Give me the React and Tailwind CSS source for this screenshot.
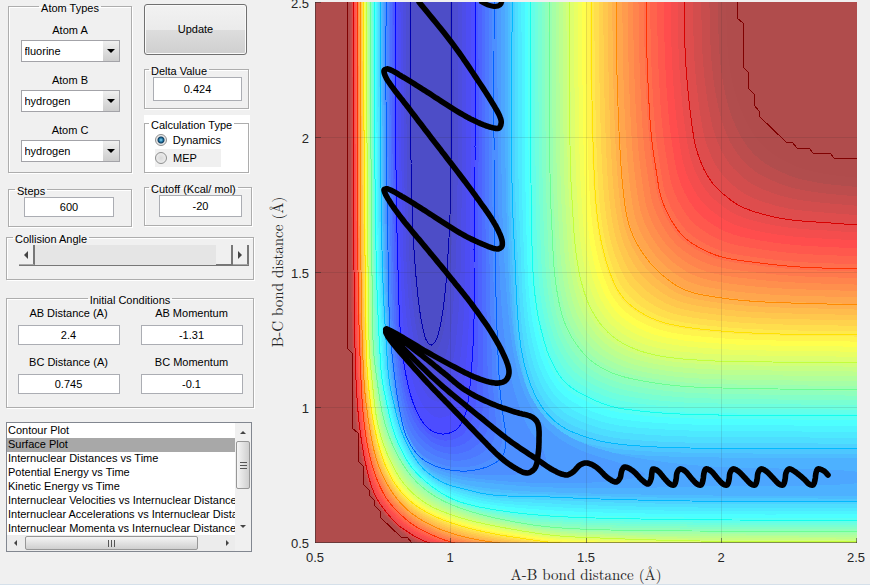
import { useState } from "react";

const atoms = ["fluorine", "hydrogen", "chlorine", "iodine"];
const plots = [
  "Contour Plot",
  "Surface Plot",
  "Internuclear Distances vs Time",
  "Potential Energy vs Time",
  "Kinetic Energy vs Time",
  "Internuclear Velocities vs Internuclear Distance",
  "Internuclear Accelerations vs Internuclear Distance",
  "Internuclear Momenta vs Internuclear Distance",
];

// Upper right side of each energy level, from the top edge to the right edge
const upper = [
  [1, [[730, 2], [733, 60], [743, 100], [764, 138], [795, 160], [825, 169], [857, 173]]],
  [2, [[684, 2], [686, 67], [694, 139], [702, 165], [711, 181], [721, 192], [740, 206], [766, 215], [792, 220], [831, 223], [857, 225]]],
  [3, [[646, 2], [647, 58], [651, 132], [657, 176], [661, 197], [670, 218], [683, 236], [700, 248], [722, 257], [752, 262], [800, 267], [857, 269]]],
  [4, [[616, 2], [617, 75], [620, 150], [624, 198], [630, 228], [642, 252], [660, 273], [685, 290], [722, 298], [765, 302], [827, 304], [857, 305]]],
  [5, [[591, 2], [592, 100], [595, 190], [600, 235], [609, 270], [621, 295], [640, 312], [669, 324], [721, 331], [780, 334], [857, 335]]],
  [6, [[569, 2], [570, 145], [572, 200], [577, 260], [587, 300], [603, 327], [626, 345], [660, 356], [715, 361], [772, 362], [857, 363]]],
  [7, [[549, 2], [550, 173], [552, 230], [556, 285], [566, 326], [586, 356], [610, 372], [638, 380], [680, 386], [722, 388], [857, 390]]],
  [8, [[530, 2], [531, 183], [533, 272], [537, 310], [543, 337], [550, 358], [563, 380], [580, 393], [610, 406], [640, 411], [680, 414], [722, 415], [857, 416]]],
  [9, [[512, 2], [512, 183], [515, 260], [518, 320], [522, 353], [530, 383], [542, 407], [557, 423], [575, 433], [605, 442], [640, 446], [690, 448], [857, 449]]],
  [9.4, [[508, 2], [508, 200], [511, 290], [516, 350], [525, 395], [542, 425], [575, 446], [630, 455], [720, 458], [857, 459]]],
];

// Lower left side; levels that leave through the bottom run on below it and get clipped
const lower = [
  [1, [[349, 2], [350, 270], [352, 380], [355, 430], [362, 470], [372, 497], [384, 516], [398, 530], [412, 542], [500, 575], [857, 600]]],
  [2, [[353, 2], [354, 270], [356, 380], [360, 430], [367, 470], [375, 495], [387, 513], [402, 528], [430, 543], [520, 562], [857, 585]]],
  [3, [[357, 2], [358, 270], [361, 380], [365, 430], [373, 468], [385, 496], [400, 514], [420, 529], [455, 543], [540, 556], [857, 572]]],
  [4, [[360, 2], [361, 270], [364, 380], [370, 430], [378, 464], [392, 492], [410, 512], [435, 527], [465, 537], [500, 543], [600, 552], [857, 563]]],
  [5, [[363, 2], [366, 340], [368, 380], [374, 425], [384, 462], [398, 488], [418, 507], [446, 521], [485, 532], [540, 541], [560, 543], [857, 552]]],
  [6, [[366, 2], [369, 340], [372, 380], [378, 425], [389, 458], [405, 485], [427, 504], [455, 516], [490, 525], [550, 535], [600, 538], [700, 541], [857, 542]]],
  [7, [[370, 2], [373, 340], [377, 380], [384, 420], [395, 450], [412, 477], [433, 495], [460, 508], [500, 519], [550, 527], [610, 530], [700, 531], [857, 531]]],
  [8, [[374, 2], [376, 250], [381, 370], [386, 400], [395, 435], [410, 465], [430, 485], [455, 500], [490, 509], [550, 516], [640, 519], [740, 520], [857, 520]]],
  [9, [[380, 2], [382, 250], [388, 370], [393, 400], [403, 435], [420, 465], [440, 481], [460, 488], [493, 495], [550, 497], [600, 499], [690, 501], [857, 501]]],
  [9.4, [[382, 2], [384, 250], [390, 362], [396, 405], [408, 440], [425, 466], [445, 478], [480, 487], [550, 492], [700, 495], [857, 496]]],
];

// Levels that close inside the plot
const wells = [
  [10, [[386, 2], [386, 100], [388, 250], [390, 330], [395, 380], [400, 412], [407, 438], [420, 457], [438, 467], [460, 471], [480, 469], [495, 463], [503, 455], [506, 440], [503, 415], [500, 390], [497, 330], [495, 250], [494, 150], [494, 2]]],
  [11, [[395, 2], [396, 170], [398, 270], [401, 340], [408, 385], [417, 412], [429, 429], [443, 434], [457, 429], [466, 412], [471, 375], [474, 320], [474, 250], [475, 160], [475, 2]]],
  [12, [[410, 2], [411, 160], [412, 200], [414, 250], [419, 305], [425, 337], [431, 345], [437, 338], [443, 310], [447, 270], [450, 215], [451, 160], [451, 2]]],
];

// Tongues of the valley between the last open level and the first closed one
const tongues = {
  16: [[383, 2], [385, 250], [391, 362], [397, 405], [410, 442], [428, 467], [450, 477], [480, 482], [540, 487], [620, 488], [720, 486], [860, 483], [860, 472], [720, 467], [650, 460], [600, 449], [565, 434], [540, 411], [524, 380], [513, 330], [508, 260], [505, 130], [505, 2]],
  15: [[384, 2], [386, 250], [392, 362], [398, 406], [412, 443], [430, 465], [455, 475], [490, 480], [540, 483], [600, 482], [645, 475], [625, 465], [580, 450], [550, 431], [530, 405], [517, 370], [508, 310], [502, 200], [501, 2]],
  14: [[385, 2], [387, 250], [392, 350], [399, 406], [413, 445], [432, 463], [455, 472], [485, 475], [520, 474], [545, 465], [543, 450], [527, 425], [514, 390], [506, 350], [500, 280], [498, 150], [497, 2]],
};

const cutoffLines = [
  "M347 2V348L352 353V428L358 433V461L363 466V484L369 490V495L374 500V505L380 511V517L401 537H407L412 543",
  "M737 2V18L743 23V67L748 72V88L754 94V105L759 111V116L786 142H792L797 148H809L813 153H830L834 158H857",
];

const peaks = [653, 680, 706, 733, 761, 789];
const troughs = [674, 701, 727, 755, 783, 813];
const wave = peaks.flatMap((p, i) => {
  const t = troughs[i];
  return [[p, 469], [p + 5, 471], [t - 9, 479], [t - 4, 484], [t, 485], [t + 2, 480], [t + 3, 473]];
});
const trajectory = [
  [419, 2], [452, 43], [473, 73], [493, 104], [501, 120], [499, 128], [490, 127], [477, 122], [460, 113], [427, 92], [403, 77],
  [388, 69], [384, 71], [388, 81], [407, 106], [433, 140], [460, 175], [480, 202], [493, 221], [501, 237], [502, 246], [497, 249],
  [480, 243], [460, 233], [427, 212], [403, 197], [388, 189], [384, 190], [390, 202], [403, 220], [427, 249], [450, 277], [473, 306],
  [493, 335], [506, 360], [509, 373], [505, 381], [495, 383], [477, 378], [460, 370], [427, 352], [387, 329], [386, 333], [395, 346],
  [425, 380], [450, 406], [480, 437], [500, 457], [515, 468], [527, 473], [535, 468], [538, 455], [539, 440], [538, 424], [532, 417],
  [515, 412], [490, 403], [465, 390], [445, 374], [420, 354], [386, 329], [405, 350], [440, 384], [480, 417], [510, 441], [538, 460],
  [553, 470], [566, 475], [573, 472], [580, 465], [587, 463], [596, 467], [608, 478], [616, 482], [620, 478], [622, 470], [625, 467],
  [633, 471], [642, 480], [648, 484], [651, 479], [652, 472], ...wave, [818, 469], [824, 471], [828, 475],
];

const smooth = (pts) => {
  const out = [];
  for (let i = 0; i < pts.length - 1; i++) {
    const p0 = pts[i - 1] || pts[i];
    const p1 = pts[i];
    const p2 = pts[i + 1];
    const p3 = pts[i + 2] || p2;
    // spacing of the points is uneven, so tangents are scaled to each segment
    const len = (a, b) => Math.hypot(b[0] - a[0], b[1] - a[1]) || 1;
    const d = len(p1, p2);
    const m1 = [0, 1].map((k) => ((p2[k] - p0[k]) / (len(p0, p1) + d)) * d);
    const m2 = [0, 1].map((k) => ((p3[k] - p1[k]) / (len(p2, p3) + d)) * d);
    for (let s = 0; s < 12; s++) {
      const t = s / 12;
      const a = 2 * t ** 3 - 3 * t ** 2 + 1;
      const b = t ** 3 - 2 * t ** 2 + t;
      const c = -2 * t ** 3 + 3 * t ** 2;
      const e = t ** 3 - t ** 2;
      out.push([0, 1].map((k) => a * p1[k] + b * m1[k] + c * p2[k] + e * m2[k]));
    }
  }
  out.push(pts[pts.length - 1]);
  return out;
};

const sample = (pts, param) => {
  const line = smooth(pts);
  const key = param(line);
  const out = [];
  let j = 0;
  for (let i = 0; i <= 160; i++) {
    const u = i / 160;
    while (j < line.length - 2 && key[j + 1] < u) j++;
    const f = Math.min(1, Math.max(0, (u - key[j]) / (key[j + 1] - key[j] || 1)));
    out.push([0, 1].map((k) => line[j][k] + f * (line[j + 1][k] - line[j][k])));
  }
  return out;
};

// open curves are matched by the angle seen from the top right corner
const byAngle = (line) => line.map(([x, y]) => Math.atan2(y - 2, 857 - x) / (Math.PI / 2));
const byLength = (line) => {
  let sum = 0;
  const acc = line.map((p, i) => (i ? (sum += Math.hypot(p[0] - line[i - 1][0], p[1] - line[i - 1][1])) : 0));
  return acc.map((v) => v / sum);
};

const between = (keys, level) => {
  let i = 0;
  while (i < keys.length - 2 && keys[i + 1][0] < level) i++;
  const [l0, a] = keys[i];
  const [l1, b] = keys[i + 1];
  const f = Math.min(1, (level - l0) / (l1 - l0));
  return a.map((p, n) => [0, 1].map((k) => p[k] + f * (b[n][k] - p[k])));
};

const toPath = (pts) => "M" + pts.map((p) => p[0].toFixed(1) + " " + p[1].toFixed(1)).join("L");

const jet = (i, alpha) => {
  const v = i / 64;
  const ch = (c) => Math.min(1, Math.max(0, 1.5 - Math.abs(4 * v - c)));
  return `rgb(${[3, 2, 1].map((c) => Math.round(255 * (ch(c) * alpha + 1 - alpha))).join(",")})`;
};

const step = 5.55;
const upperKeys = upper.map(([l, p]) => [l, sample(p, byAngle)]);
const lowerKeys = lower.map(([l, p]) => [l, sample(p, byAngle)]);
const wellKeys = wells.map(([l, p]) => [l, sample(p, byLength)]);

const bandShape = (i) => {
  const level = 1 + (63.5 - i) / step;
  if (tongues[i]) return smooth(tongues[i]);
  if (level < 9.5) return [...between(lowerKeys, level), ...between(upperKeys, level).reverse()];
  return between(wellKeys, level);
};

const bands = [];
for (let i = 63; i >= 3; i--) {
  bands.push({ d: toPath(bandShape(i)) + "Z", fill: jet(i, 0.7) });
}

const contours = [...upper.slice(1, 9), ...lower.slice(1, 9), ...wells].map(([level, p]) => ({
  d: toPath(smooth(p)),
  stroke: jet(64 - (level - 1) * step, 1),
}));

const trajectoryPath = toPath(smooth(trajectory));

const xTicks = [["0.5", 315], ["1", 450], ["1.5", 586], ["2", 721], ["2.5", 856]];
const yTicks = [["2.5", 3], ["2", 138], ["1.5", 273], ["1", 408], ["0.5", 543]];

const ContourPlot = () => (
  <svg viewBox="256 0 614 584" className="block w-full h-auto" role="img" aria-label="Potential energy contour plot">
    <clipPath id="box"><rect x="315" y="2" width="542" height="541" /></clipPath>
    <g clipPath="url(#box)">
      <rect x="315" y="2" width="542" height="541" fill="#b04c4c" />
      <g shapeRendering="crispEdges">
        {bands.map((b, i) => <path key={i} d={b.d} fill={b.fill} />)}
        {contours.map((c, i) => <path key={i} d={c.d} fill="none" stroke={c.stroke} />)}
        {cutoffLines.map((d) => <path key={d} d={d} fill="none" stroke="#800000" />)}
      </g>
      <path d="M450.5 2V543M586.5 2V543M721.5 2V543M315 137.5H857M315 272.5H857M315 407.5H857" stroke="#262626" strokeOpacity="0.12" />
      <path d={trajectoryPath} fill="none" stroke="#000" strokeWidth="5.6" strokeLinejoin="round" strokeLinecap="round" />
      <path d="M480 1Q488 6 494 6.500Q501 7 502 1" fill="none" stroke="#000" strokeWidth="5" />
      <path d="M315.5 2V543M315 542.500H857" stroke="#262626" strokeOpacity="0.5" />
      <path d="M450.5 538V543M586.5 538V543M721.5 538V543M856.5 538V543M315 2.500H321M315 137.500H321M315 272.500H321M315 407.500H321" stroke="#262626" strokeOpacity="0.5" />
    </g>
    <g fill="#262626" fontFamily="Liberation Sans, Arial, sans-serif" fontSize="13">
      {xTicks.map(([label, x]) => <text key={label} x={x} y="562" textAnchor="middle">{label}</text>)}
      {yTicks.map(([label, y]) => <text key={label} x="309" y={y + 5} textAnchor="end">{label}</text>)}
    </g>
    <g fill="#262626" fontFamily="Latin Modern Roman, Liberation Serif, serif" fontSize="15" textAnchor="middle">
      <text x="586" y="580">A-B bond distance (Å)</text>
      <text transform="translate(283 272) rotate(-90)">B-C bond distance (Å)</text>
    </g>
  </svg>
);

const Panel = ({ title, className = "", legend = "ml-1", children }) => (
  <fieldset className={`min-w-0 border border-[#adadad] shadow-[1px_1px_0_#fff,inset_1px_1px_0_#fff] ${className}`}>
    <legend className={`pt-1 px-0.5 leading-3 ${legend}`}>{title}</legend>
    {children}
  </fieldset>
);

const NumberBox = ({ label, value, className = "h-5" }) => {
  const [text, setText] = useState(value);
  return (
    <input type="text" aria-label={label} value={text} onChange={(e) => setText(e.target.value)}
      className={`block border border-[#abadb3] bg-white text-center ${className}`} />
  );
};

const AtomSelect = ({ label, value }) => (
  <label className="flex flex-col items-center gap-0.5">
    <span className="leading-4">{label}</span>
    <span className="relative block">
      <select defaultValue={value} className="block w-[99px] h-[22px] appearance-none border border-[#a3a3a8] bg-white pl-[3px] pr-4">
        {atoms.map((a) => <option key={a}>{a}</option>)}
      </select>
      <span className="pointer-events-none absolute top-px right-px flex h-5 w-4 items-center justify-center bg-gradient-to-b from-[#f0f0f0] to-[#cdcdcd]">
        <svg viewBox="0 0 8 4" className="w-2 h-1"><path d="M0 0H8L4 4Z" /></svg>
      </span>
    </span>
  </label>
);

const radioClass = "m-0 h-3 w-3 appearance-none rounded-full border border-[#8e8f8f] bg-[radial-gradient(#d8d8d8,#f4f4f4)] checked:bg-[radial-gradient(circle,#8fdcf8_0px,#1b6f9f_2px,#123c5c_3px,#e8e8e8_4px)]";

const Field = ({ label, value }) => (
  <div className="flex flex-col items-center gap-1">
    <span className="leading-[15px]">{label}</span>
    <NumberBox label={label} value={value} className="w-[102px] h-5" />
  </div>
);

const Arrow = ({ d, className = "" }) => (
  <svg viewBox="0 0 8 8" className={`w-2 h-2 fill-[#444] ${className}`}><path d={d} /></svg>
);

const App = () => {
  const [mode, setMode] = useState("Dynamics");
  const [plot, setPlot] = useState("Surface Plot");
  const [angle, setAngle] = useState(180);

  return (
    <div className="bg-[#f0f0f0] text-black text-[11px] font-['Liberation_Sans',Arial,sans-serif] border-b border-[#d5e0ea] flex items-start overflow-hidden">
      <aside className="w-64 shrink-0 -mt-0.5 pb-8">
        <div className="flex gap-3 pl-2">
          <div className="w-[124px] flex flex-col gap-2">
            <Panel title="Atom Types" legend="mx-auto" className="h-[175px]">
              <div className="flex flex-col gap-2.5 pt-2">
                <AtomSelect label="Atom A" value="fluorine" />
                <AtomSelect label="Atom B" value="hydrogen" />
                <AtomSelect label="Atom C" value="hydrogen" />
              </div>
            </Panel>
            <Panel title="Steps" legend="ml-1.5" className="h-[46px]">
              <NumberBox label="Steps" value="600" className="w-[90px] h-5 ml-[15px]" />
            </Panel>
          </div>
          <div className="w-[108px] flex flex-col pt-1.5">
            <button className="w-[103px] h-[51px] rounded-[3px] border border-[#707070] bg-[linear-gradient(#f2f2f2_0%,#ebebeb_50%,#dddddd_51%,#cfcfcf_100%)] shadow-[inset_0_0_0_1px_#fafafa]">Update</button>
            <Panel title="Delta Value" className="mt-1.5 mr-[3px] h-12">
              <NumberBox label="Delta Value" value="0.424" className="w-[89px] h-6 ml-2" />
            </Panel>
            <div className="mt-1.5 mr-0.5 bg-white">
              <Panel title="Calculation Type" legend="ml-1 bg-white" className="mr-px h-[58px]">
                <div className="flex flex-col pl-2.5">
                  {["Dynamics", "MEP"].map((m) => (
                    <label key={m} className={`flex w-[66px] h-[18px] items-center gap-1.5 ${m === "MEP" ? "bg-[#f0f0f0]" : ""}`}>
                      <input type="radio" name="mode" checked={mode === m} onChange={() => setMode(m)} className={radioClass} />
                      {m}
                    </label>
                  ))}
                </div>
              </Panel>
            </div>
            <Panel title="Cutoff (Kcal/ mol)" className="mt-1.5 h-[47px]">
              <NumberBox label="Cutoff (Kcal/ mol)" value="-20" className="w-[83px] h-[22px] ml-[14px]" />
            </Panel>
          </div>
        </div>

        <div className="pl-1.5 pr-0.5">
          <Panel title="Collision Angle" legend="ml-1.5" className="mt-0.5 h-[51px]">
            <div className="mx-3 mr-1 flex h-[21px] border-b border-[#777]">
              <button aria-label="Decrease angle" onClick={() => setAngle(angle - 1)} className="flex w-4 items-center justify-center border-r-2 border-b border-[#777] border-b-[#aaa]">
                <Arrow d="M6 0V8L2 4Z" />
              </button>
              <input type="range" aria-label="Collision Angle" min="0" max="180" value={angle} onChange={(e) => setAngle(Number(e.target.value))}
                className="m-0 h-5 min-w-0 flex-1 appearance-none bg-[#e5e5e5] [&::-webkit-slider-thumb]:appearance-none [&::-webkit-slider-thumb]:w-[17px] [&::-webkit-slider-thumb]:h-5 [&::-webkit-slider-thumb]:bg-[#f0f0f0] [&::-webkit-slider-thumb]:shadow-[inset_-2px_-1px_0_#777]" />
              <button aria-label="Increase angle" onClick={() => setAngle(angle + 1)} className="flex w-4 items-center justify-center border-r-2 border-b border-[#777] border-b-[#aaa]">
                <Arrow d="M2 0V8L6 4Z" />
              </button>
            </div>
          </Panel>

          <Panel title="Initial Conditions" legend="mx-auto" className="mt-2.5 h-[118px]">
            <div className="grid grid-cols-2 gap-y-2.5">
              <Field label="AB Distance (A)" value="2.4" />
              <Field label="AB Momentum" value="-1.31" />
              <Field label="BC Distance (A)" value="0.745" />
              <Field label="BC Momentum" value="-0.1" />
            </div>
          </Panel>

          <div className="mt-3.5 grid w-[246px] h-[130px] grid-cols-[1fr_16px] grid-rows-[1fr_16px] border border-[#828790]">
            <select size={8} aria-label="Plot type" value={plot} onChange={(e) => setPlot(e.target.value)} className="h-full w-full min-w-0 overflow-hidden bg-white pt-px outline-none">
              {plots.map((p) => (
                <option key={p} className="h-[14px] min-h-0 p-0 pl-px leading-[14px] text-black checked:bg-[linear-gradient(#a8a8a8,#a8a8a8)] checked:text-black">{p}</option>
              ))}
            </select>
            <div className="flex flex-col items-center bg-[#f0f0f0]">
              <Arrow d="M1 6H7L4 3Z" className="my-[5px]" />
              <div className="flex h-12 w-[14px] flex-col items-center justify-center gap-0.5 rounded-[2px] border border-[#979797] bg-gradient-to-r from-[#f5f5f5] to-[#cfcfcf]">
                <span className="h-px w-[7px] bg-[#555]" />
                <span className="h-px w-[7px] bg-[#555]" />
                <span className="h-px w-[7px] bg-[#555]" />
              </div>
              <Arrow d="M1 2H7L4 5Z" className="mt-auto mb-1" />
            </div>
            <div className="flex items-center bg-[#ececec]">
              <Arrow d="M5 1V7L2 4Z" className="mx-[5px]" />
              <div className="flex h-[14px] w-[173px] items-center justify-center gap-0.5 rounded-[2px] border border-[#979797] bg-gradient-to-b from-[#f5f5f5] to-[#cfcfcf]">
                <span className="w-px h-[7px] bg-[#555]" />
                <span className="w-px h-[7px] bg-[#555]" />
                <span className="w-px h-[7px] bg-[#555]" />
              </div>
              <Arrow d="M3 1V7L6 4Z" className="ml-auto mr-1" />
            </div>
            <div className="bg-[#f0f0f0]" />
          </div>
        </div>
      </aside>
      <main className="min-w-0 flex-1">
        <ContourPlot />
      </main>
    </div>
  );
};

export default App;
